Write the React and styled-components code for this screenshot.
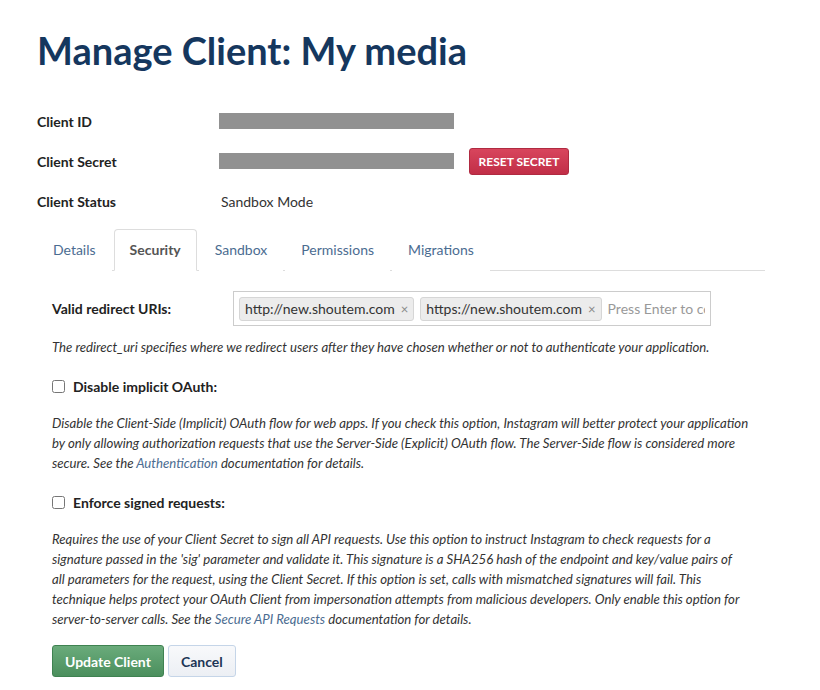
import React, { useState } from 'react';
import styled, { createGlobalStyle } from 'styled-components';

const GlobalStyle = createGlobalStyle`
  body {
    margin: 0;
    background: #fff;
    font-family: Lato, "Liberation Sans", sans-serif;
    color: #222;
  }
`;

const tabs = ['Details', 'Security', 'Sandbox', 'Permissions', 'Migrations'];

const App = () => {
  const [active, setActive] = useState('Security');
  const [implicit, setImplicit] = useState(false);
  const [signed, setSigned] = useState(false);

  return (
    <Page>
      <GlobalStyle />
      <Title>Manage Client: My media</Title>

      <InfoTable>
        <InfoRow>
          <InfoLabel>Client ID</InfoLabel>
          <Redacted />
        </InfoRow>
        <InfoRow>
          <InfoLabel>Client Secret</InfoLabel>
          <Redacted />
          <ResetButton>Reset Secret</ResetButton>
        </InfoRow>
        <InfoRow>
          <InfoLabel>Client Status</InfoLabel>
          <InfoValue>Sandbox Mode</InfoValue>
        </InfoRow>
      </InfoTable>

      <TabBar>
        {tabs.map((t) => (
          <Tab key={t} $active={t === active} onClick={() => setActive(t)}>
            {t}
          </Tab>
        ))}
      </TabBar>

      <Pane>
        <FieldRow>
          <FieldLabel>Valid redirect URIs:</FieldLabel>
          <TagInput>
            <TagChip>
              http://new.shoutem.com <TagClose>×</TagClose>
            </TagChip>
            <TagChip>
              https://new.shoutem.com <TagClose>×</TagClose>
            </TagChip>
            <TagField placeholder="Press Enter to confirm" />
          </TagInput>
        </FieldRow>
        <Help>
          The redirect_uri specifies where we redirect users after they have chosen whether or not to
          authenticate your application.
        </Help>

        <CheckRow>
          <Check type="checkbox" checked={implicit} onChange={() => setImplicit(!implicit)} />
          <CheckLabel>Disable implicit OAuth:</CheckLabel>
        </CheckRow>
        <Help>
          Disable the Client-Side (Implicit) OAuth flow for web apps. If you check this option, Instagram
          will better protect your application by only allowing authorization requests that use the
          Server-Side (Explicit) OAuth flow. The Server-Side flow is considered more secure. See the{' '}
          <DocLink href="#">Authentication</DocLink> documentation for details.
        </Help>

        <CheckRow>
          <Check type="checkbox" checked={signed} onChange={() => setSigned(!signed)} />
          <CheckLabel>Enforce signed requests:</CheckLabel>
        </CheckRow>
        <Help $width={692}>
          Requires the use of your Client Secret to sign all API requests. Use this option to instruct
          Instagram to check requests for a signature passed in the 'sig' parameter and validate it. This
          signature is a SHA256 hash of the endpoint and key/value pairs of all parameters for the request,
          using the Client Secret. If this option is set, calls with mismatched signatures will fail. This
          technique helps protect your OAuth Client from impersonation attempts from malicious developers.
          Only enable this option for server-to-server calls. See the{' '}
          <DocLink href="#">Secure API Requests</DocLink> documentation for details.
        </Help>

        <Actions>
          <Button $variant="primary">Update Client</Button>
          <Button>Cancel</Button>
        </Actions>
      </Pane>
    </Page>
  );
};
export default App;

const Page = styled.div`
  width: 728px;
  padding: 0 0 20px 37px;
`;

const Title = styled.h1`
  margin: 0;
  padding-top: 27px;
  height: 68px;
  font-size: 38px;
  font-weight: 700;
  line-height: 46px;
  color: #15375e;
`;

const InfoTable = styled.div`
  display: flex;
  flex-direction: column;
  margin-top: 6px;
`;

const InfoRow = styled.div`
  display: flex;
  align-items: center;
  height: 40px;
`;

const InfoLabel = styled.div`
  width: 182px;
  font-size: 14px;
  font-weight: 700;
  color: #222;
`;

const InfoValue = styled.div`
  padding-left: 2px;
  font-size: 14px;
  color: #333;
`;

const Redacted = styled.div`
  width: 235px;
  height: 16px;
  background: #919191;
`;

const ResetButton = styled.button`
  margin-left: 15px;
  width: 100px;
  height: 27px;
  border: 1px solid #b02a41;
  border-radius: 3px;
  background: linear-gradient(#d8455d, #c12e47);
  color: #fff;
  font-family: inherit;
  font-size: 12px;
  font-weight: 700;
  text-transform: uppercase;
  cursor: pointer;
`;

const TabBar = styled.div`
  display: flex;
  margin-top: 8px;
  border-bottom: 1px solid #ddd;
`;

const Tab = styled.div`
  margin-right: 2px;
  margin-bottom: -1px;
  padding: 0 15px;
  height: 40px;
  line-height: 40px;
  font-size: 14px;
  cursor: pointer;
  border: 1px solid ${(p) => (p.$active ? '#ddd' : 'transparent')};
  border-bottom-color: ${(p) => (p.$active ? '#fff' : 'transparent')};
  border-radius: 4px 4px 0 0;
  background: #fff;
  color: ${(p) => (p.$active ? '#555' : '#4b6c91')};
  font-weight: ${(p) => (p.$active ? 700 : 400)};
`;

const Pane = styled.div`
  padding: 20px 13px 0 15px;
`;

const FieldRow = styled.div`
  display: flex;
  align-items: center;
`;

const FieldLabel = styled.div`
  width: 181px;
  font-size: 14px;
  font-weight: 700;
  color: #222;
`;

const TagInput = styled.div`
  display: flex;
  align-items: center;
  gap: 6px;
  width: 478px;
  height: 35px;
  box-sizing: border-box;
  padding: 0 5px;
  border: 1px solid #ccc;
  overflow: hidden;
`;

const TagChip = styled.span`
  flex: none;
  display: inline-flex;
  align-items: center;
  gap: 6px;
  height: 24px;
  box-sizing: border-box;
  padding: 0 5px;
  border: 1px solid #d6d6d6;
  border-radius: 3px;
  background: #ececec;
  font-size: 14px;
  color: #333;
`;

const TagClose = styled.span`
  font-size: 13px;
  color: #888;
`;

const TagField = styled.input`
  flex: 1;
  min-width: 0;
  border: none;
  outline: none;
  padding: 0;
  font-family: inherit;
  font-size: 14px;
  &::placeholder {
    color: #999;
  }
`;

const Help = styled.p`
  margin: 11px 0 0;
  max-width: ${(p) => (p.$width ? `${p.$width}px` : 'none')};
  font-size: 13.2px;
  font-style: italic;
  line-height: 20px;
  color: #333;
`;

const CheckRow = styled.label`
  display: flex;
  align-items: center;
  gap: 8px;
  margin-top: 21px;
  margin-bottom: 18px;
`;

const Check = styled.input`
  margin: 0;
  width: 13px;
  height: 13px;
`;

const CheckLabel = styled.span`
  font-size: 14px;
  font-weight: 700;
  color: #222;
`;

const DocLink = styled.a`
  color: #4b6c91;
  text-decoration: none;
`;

const Actions = styled.div`
  display: flex;
  gap: 4px;
  margin-top: 16px;
`;

const Button = styled.button`
  height: 32px;
  padding: 0 12px;
  border-radius: 3px;
  font-family: inherit;
  font-size: 14px;
  font-weight: 700;
  cursor: pointer;
  border: 1px solid ${(p) => (p.$variant === 'primary' ? '#3f8251' : '#c5d5e8')};
  background: ${(p) =>
    p.$variant === 'primary' ? 'linear-gradient(#6aab7b, #4b8f5d)' : 'linear-gradient(#f8f9fb, #eceff4)'};
  color: ${(p) => (p.$variant === 'primary' ? '#fff' : '#1c3556')};
`;
